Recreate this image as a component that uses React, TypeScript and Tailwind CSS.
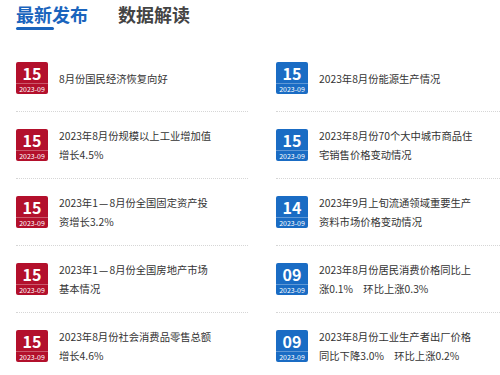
import React from "react";

const left = [
  { day: "15", title: "8月份国民经济恢复向好" },
  { day: "15", title: "2023年8月份规模以上工业增加值增长4.5%" },
  { day: "15", title: "2023年1—8月份全国固定资产投资增长3.2%" },
  { day: "15", title: "2023年1—8月份全国房地产市场基本情况" },
  { day: "15", title: "2023年8月份社会消费品零售总额增长4.6%" },
];

const right = [
  { day: "15", title: "2023年8月份能源生产情况" },
  { day: "15", title: "2023年8月份70个大中城市商品住宅销售价格变动情况" },
  { day: "14", title: "2023年9月上旬流通领域重要生产资料市场价格变动情况" },
  { day: "09", title: "2023年8月份居民消费价格同比上涨0.1%　环比上涨0.3%" },
  { day: "09", title: "2023年8月份工业生产者出厂价格同比下降3.0%　环比上涨0.2%" },
];

// the dash between months is a bit wider than in Noto, like the original font
function Title({ text }: { text: string }) {
  const parts = text.split("—");
  return (
    <>
      {parts.map((p, i) => (
        <React.Fragment key={i}>
          {i > 0 && <span className="mx-[1.2px]">—</span>}
          {p}
        </React.Fragment>
      ))}
    </>
  );
}

function Item({ day, title, red }: { day: string; title: string; red: boolean }) {
  return (
    <li className="flex items-center gap-[11px] h-[67px] border-b border-dotted border-[#d6d6d6]">
      <div
        className={
          "shrink-0 w-[32px] h-[32px] rounded-[2px] flex flex-col items-center text-white " +
          (red ? "bg-[#b3102c]" : "bg-[#1a6cc4]")
        }
      >
        <b className="text-[16px] leading-[20px] mt-[1px] font-bold">{day}</b>
        <span className="text-[7px] leading-[9px] w-full text-center border-t border-white/30 pt-[1px]">
          2023-09
        </span>
      </div>
      <span className="w-[156px] text-[10.3px] leading-[19px] text-[#333]">
        <Title text={title} />
      </span>
    </li>
  );
}

export default function App() {
  return (
    <div
      className="w-[500px] h-[375px] overflow-hidden bg-white pl-4"
      style={{ fontFamily: '"Noto Sans CJK SC", "Noto Sans", sans-serif' }}
    >
      <div className="flex gap-[30px] h-[45px] pt-[1px]">
        <div className="flex flex-col">
          <span className="text-[18px] leading-[26px] font-bold text-[#1a64bd]">最新发布</span>
          <span className="block w-[38px] h-[3px] rounded-full bg-[#1a64bd]" />
        </div>
        <span className="text-[18px] leading-[26px] font-bold text-[#444]">数据解读</span>
      </div>
      <div className="grid grid-cols-[232px_224px] gap-x-[28px]">
        <ul>
          {left.map((t, i) => (
            <Item key={i} day={t.day} title={t.title} red />
          ))}
        </ul>
        <ul>
          {right.map((t, i) => (
            <Item key={i} day={t.day} title={t.title} red={false} />
          ))}
        </ul>
      </div>
    </div>
  );
}
